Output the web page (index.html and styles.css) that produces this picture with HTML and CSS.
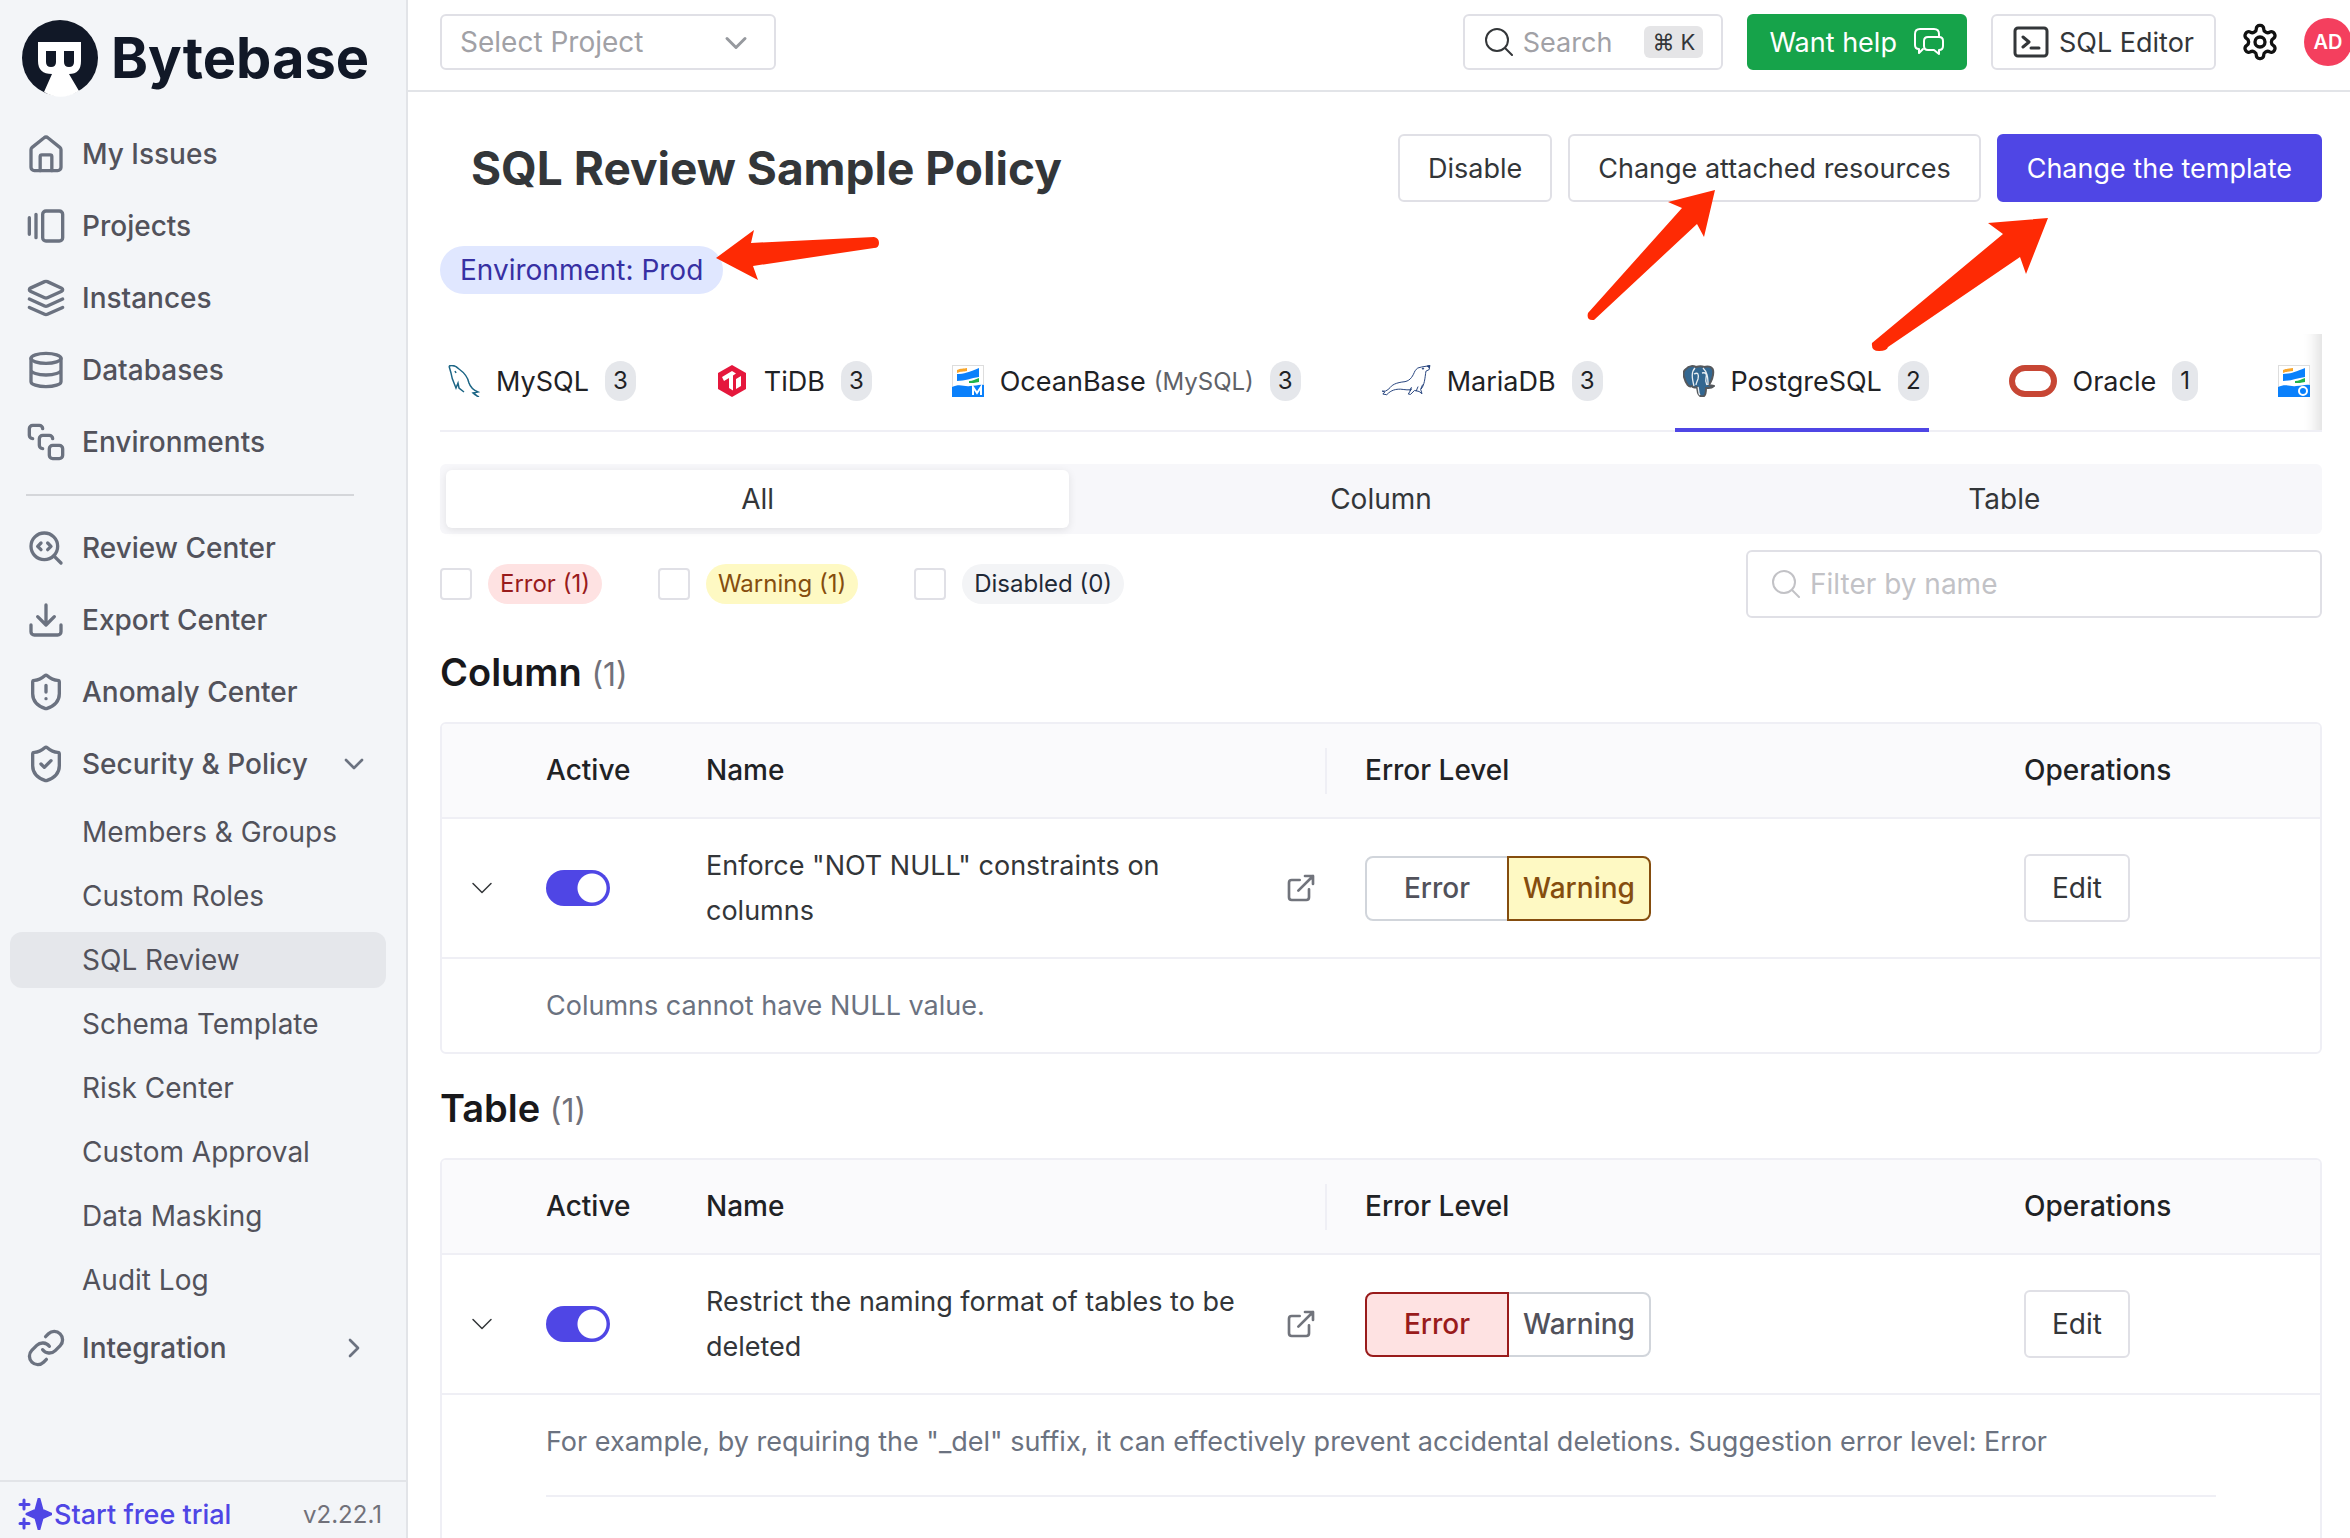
FILE: index.html
```html
<!DOCTYPE html>
<html lang="en">
<head>
<meta charset="utf-8">
<title>SQL Review Sample Policy - Bytebase</title>
<link rel="stylesheet" href="styles.css">
</head>
<body>
<svg class="sprite" aria-hidden="true">
  <symbol id="chevron-down" viewBox="0 0 24 24"><path d="m6 9 6 6 6-6"/></symbol>
  <symbol id="external" viewBox="0 0 24 24"><path d="M15 3h6v6M10 14 21 3M18 13v6a2 2 0 0 1-2 2H5a2 2 0 0 1-2-2V8a2 2 0 0 1 2-2h6"/></symbol>
  <symbol id="search" viewBox="0 0 28 28"><circle cx="12" cy="12" r="11"/><path d="m20 20 7 7"/></symbol>
  <symbol id="oceanbase" viewBox="0 0 32 32">
    <rect x=".5" y=".5" width="31" height="31" fill="#fff" stroke="#ddd"/>
    <path fill="#f8a62b" d="M5 5c4-2 6-1 10-2v3c-4 1-6 0-10 2z"/>
    <path fill="#0a80fb" d="M5 9c7 0 12-2 22-6v9c-8 1-14 4-22 4z"/>
    <path fill="#20b34a" d="M17 16c4 0 6-2 10-3v4c-4 1-7 1-10 1z"/>
    <path fill="#0a80fb" d="M0 22c8-4 12 0 18-1 6 0 9-2 14-1v12H0z"/>
  </symbol>
</svg>
<div class="app">
  <aside class="sidebar">
    <a class="brand" href="#">
      <svg class="brand-mark" viewBox="0 0 76 80" aria-hidden="true">
        <circle cx="38" cy="38" r="38" fill="#111827"/>
        <path fill="#fff" d="M16 22h43v19q0 13-12 13l10 17q-18 11-35 1l8-18q-14 0-14-13z"/>
        <path fill="#111827" d="M24 31h10v11q0 5-5 5t-5-5zM42 31h10v11q0 5-5 5t-5-5z"/>
      </svg>
      <span>Bytebase</span>
    </a>
    <nav class="nav">
      <a class="nav-item" href="#"><svg class="ico" viewBox="0 0 24 24"><path d="M3 9.500a2 2 0 0 1 .7-1.500l7-5.600a2 2 0 0 1 2.600 0l7 5.600a2 2 0 0 1 .7 1.500V20a2 2 0 0 1-2 2H5a2 2 0 0 1-2-2z"/><path d="M8.500 22v-8.500a1 1 0 0 1 1-1h5a1 1 0 0 1 1 1V22"/></svg>My Issues</a>
      <a class="nav-item" href="#"><svg class="ico" viewBox="0 0 24 24"><path d="M2 7v10M6 5v14"/><rect x="10" y="3" width="12" height="18" rx="2"/></svg>Projects</a>
      <a class="nav-item" href="#"><svg class="ico" viewBox="0 0 24 24"><path d="m12.830 2.180a2 2 0 0 0-1.660 0L2.600 6.080a1 1 0 0 0 0 1.830l8.580 3.910a2 2 0 0 0 1.660 0l8.580-3.900a1 1 0 0 0 0-1.830Z"/><path d="m22 17.650-9.170 4.160a2 2 0 0 1-1.660 0L2 17.650M22 12.650l-9.170 4.160a2 2 0 0 1-1.660 0L2 12.650"/></svg>Instances</a>
      <a class="nav-item" href="#"><svg class="ico" viewBox="0 0 24 24"><ellipse cx="12" cy="5" rx="9" ry="3"/><path d="M3 5v14a9 3 0 0 0 18 0V5M3 12a9 3 0 0 0 18 0"/></svg>Databases</a>
      <a class="nav-item" href="#"><svg class="ico" viewBox="0 0 24 24"><rect x="14" y="14" width="8" height="8" rx="2"/><path d="M4 10a2 2 0 0 1-2-2V4a2 2 0 0 1 2-2h4a2 2 0 0 1 2 2M10 16a2 2 0 0 1-2-2v-4a2 2 0 0 1 2-2h4a2 2 0 0 1 2 2"/></svg>Environments</a>
      <hr class="nav-rule">
      <a class="nav-item" href="#"><svg class="ico" viewBox="0 0 24 24"><path d="m9 9-2 2 2 2M13 13l2-2-2-2"/><circle cx="11" cy="11" r="8"/><path d="m21 21-4.300-4.300"/></svg>Review Center</a>
      <a class="nav-item" href="#"><svg class="ico" viewBox="0 0 24 24"><path d="M21 15v4a2 2 0 0 1-2 2H5a2 2 0 0 1-2-2v-4M7 10l5 5 5-5M12 15V3"/></svg>Export Center</a>
      <a class="nav-item" href="#"><svg class="ico" viewBox="0 0 24 24"><path d="M20 13c0 5-3.500 7.500-7.660 8.950a1 1 0 0 1-.67-.01C7.500 20.500 4 18 4 13V6a1 1 0 0 1 1-1c2 0 4.500-1.200 6.240-2.720a1.170 1.170 0 0 1 1.520 0C14.510 3.810 17 5 19 5a1 1 0 0 1 1 1z"/><path d="M12 8v4M12 16h.01"/></svg>Anomaly Center</a>
      <a class="nav-item" href="#"><svg class="ico" viewBox="0 0 24 24"><path d="M20 13c0 5-3.500 7.500-7.660 8.950a1 1 0 0 1-.67-.01C7.500 20.500 4 18 4 13V6a1 1 0 0 1 1-1c2 0 4.500-1.200 6.240-2.720a1.170 1.170 0 0 1 1.520 0C14.510 3.810 17 5 19 5a1 1 0 0 1 1 1z"/><path d="m9 12 2 2 4-4"/></svg>Security &amp; Policy<svg class="ico ico-end"><use href="#chevron-down"/></svg></a>
      <div class="subnav">
        <a class="sub-item" href="#">Members &amp; Groups</a>
        <a class="sub-item" href="#">Custom Roles</a>
        <a class="sub-item is-active" href="#">SQL Review</a>
        <a class="sub-item" href="#">Schema Template</a>
        <a class="sub-item" href="#">Risk Center</a>
        <a class="sub-item" href="#">Custom Approval</a>
        <a class="sub-item" href="#">Data Masking</a>
        <a class="sub-item" href="#">Audit Log</a>
      </div>
      <a class="nav-item" href="#"><svg class="ico" viewBox="0 0 24 24"><path d="M10 13a5 5 0 0 0 7.540.54l3-3a5 5 0 0 0-7.070-7.070l-1.720 1.710"/><path d="M14 11a5 5 0 0 0-7.540-.54l-3 3a5 5 0 0 0 7.070 7.070l1.710-1.710"/></svg>Integration<svg class="ico ico-end" viewBox="0 0 24 24"><path d="m9 18 6-6-6-6"/></svg></a>
    </nav>
    <footer class="side-foot">
      <a class="trial" href="#"><svg class="spark" viewBox="0 0 34 32" aria-hidden="true"><path d="M21 1 24 12l9 4-9 4-3 11-3-11-9-4 9-4zM6 2v9M2 6.500h9M6 21v9M2 25.500h9"/></svg>Start free trial</a>
      <span class="version">v2.22.1</span>
    </footer>
  </aside>

  <div class="content">
    <header class="topbar">
      <div class="select-wrap">
        <select class="select" aria-label="Project"><option>Select Project</option></select>
        <svg class="ico select-arrow"><use href="#chevron-down"/></svg>
      </div>
      <div class="top-actions">
        <button class="btn btn-top search-btn"><svg class="ico search-ico"><use href="#search"/></svg><span class="search-label">Search</span><kbd>⌘ K</kbd></button>
        <button class="btn btn-top btn-green">Want help<svg class="ico bubble" viewBox="0 0 32 32"><path d="M10 23 6 27v-4q-4 0-4-4V8q0-5 5-5h14q5 0 5 5v2"/><path d="M15 11h11q4 0 4 4v5q0 4-4 4v4l-5-4h-6q-4 0-4-4v-5q0-4 4-4z"/></svg></button>
        <button class="btn btn-top editor-btn"><svg class="ico terminal" viewBox="0 0 36 36"><rect x="2" y="4" width="32" height="28" rx="3"/><path d="m10 13 6 5-6 5M18 24h8"/></svg>SQL Editor</button>
        <a class="gear" href="#" aria-label="Settings"><svg class="ico" viewBox="0 0 24 24"><path d="M12.220 2h-.44a2 2 0 0 0-2 2v.18a2 2 0 0 1-1 1.730l-.43.25a2 2 0 0 1-2 0l-.15-.08a2 2 0 0 0-2.730.73l-.22.38a2 2 0 0 0 .73 2.730l.15.1a2 2 0 0 1 1 1.720v.51a2 2 0 0 1-1 1.740l-.15.09a2 2 0 0 0-.73 2.730l.22.38a2 2 0 0 0 2.730.73l.15-.08a2 2 0 0 1 2 0l.43.25a2 2 0 0 1 1 1.730V20a2 2 0 0 0 2 2h.44a2 2 0 0 0 2-2v-.18a2 2 0 0 1 1-1.730l.43-.25a2 2 0 0 1 2 0l.15.08a2 2 0 0 0 2.730-.73l.22-.39a2 2 0 0 0-.73-2.730l-.15-.08a2 2 0 0 1-1-1.740v-.5a2 2 0 0 1 1-1.740l.15-.09a2 2 0 0 0 .73-2.730l-.22-.38a2 2 0 0 0-2.730-.73l-.15.08a2 2 0 0 1-2 0l-.43-.25a2 2 0 0 1-1-1.730V4a2 2 0 0 0-2-2z"/><circle cx="12" cy="12" r="3"/></svg></a>
        <a class="avatar" href="#">AD</a>
      </div>
    </header>

    <main class="page">
      <div class="title-row">
        <h1>SQL Review Sample Policy</h1>
        <div class="title-actions">
          <button class="btn btn-lg">Disable</button>
          <div class="anchor">
            <button class="btn btn-lg">Change attached resources</button>
            <svg class="arrow arrow-attach" viewBox="0 0 134 134" aria-hidden="true"><path d="M131 2 84 14l14 6L4 125q-2 8 6 7L113 36l7 13z"/></svg>
          </div>
          <div class="anchor">
            <button class="btn btn-lg btn-primary">Change the template</button>
            <svg class="arrow arrow-template" viewBox="0 0 180 136" aria-hidden="true"><path d="M178 2 118 7l15 11L2 127q-1 8 7 8t9-4L150 41l6 17z"/></svg>
          </div>
        </div>
      </div>

      <div class="scope">
        <span class="anchor">
          <span class="pill">Environment: Prod</span>
          <svg class="arrow arrow-env" viewBox="0 0 166 54" aria-hidden="true"><path d="m1 30 38-28-3 13 123-6q5 1 5 6t-5 5L38 38l5 14z"/></svg>
        </span>
      </div>

      <div class="engines" role="tablist">
        <button class="engine" role="tab"><svg class="logo" viewBox="0 0 32 32" fill="none" stroke="#1c6585" stroke-width="1.500"><path d="M1 1q5-2 10 3c7 5 9 9 10 14q2 6 9 9l-5 1q2 2 6 4M1 1l2 7q1 6 3 10l2 5 2-5 1 5 5 4M26 28l4 4"/><path d="m7 6 1 2"/></svg>MySQL<span class="count">3</span></button>
        <button class="engine" role="tab"><svg class="logo" viewBox="0 0 32 32"><path fill="#e5173c" d="m16 0 14 8v16l-14 8L2 24V8z"/><path fill="#fff" d="m6 12 10-6 4 2.500-3 2v15l-4-2.500V13l-5 3zM20 14l5-3v10l-5 3z"/></svg>TiDB<span class="count">3</span></button>
        <button class="engine" role="tab"><svg class="logo" viewBox="0 0 32 32"><use href="#oceanbase"/><path fill="none" stroke="#fff" stroke-width="2" d="M21 30v-8l4 6 4-6v8"/></svg>OceanBase<span class="variant">(MySQL)</span><span class="count">3</span></button>
        <button class="engine" role="tab"><svg class="logo logo-maria" viewBox="26 32 150 98" fill="#fff" stroke="#24427c" stroke-width="3"><path d="M28 112q10 3 20-6c10-14 22-20 50-23 18-4 24-18 31-34q6-10 20-11l25-4-2 12-10 5c-3 20-4 44-16 56l4 13-9-7-14-3-12 12-7-1 10-16c-6 6-20 2-34 1-14 0-28 2-42 17l-12-2 6-6z"/><path d="M112 110l6-10M132 112l6-14M146 106l6-14"/><circle cx="153" cy="43" r="2" fill="#24427c"/><path fill="#24427c" d="m166 35 8-1-3 6z"/></svg>MariaDB<span class="count">3</span></button>
        <button class="engine is-active" role="tab" aria-selected="true"><svg class="logo" viewBox="0 0 32 32" stroke-linejoin="round"><path fill="#336791" stroke="#55585c" stroke-width="2" d="M3 4c3-4 8-3 10-2 3-1 6-1 8 0 3-1 8-1 9 3 1 5-1 10-4 15l5 1c-3 3-6 2-8 2 0 3 0 7-2 8-3 1-5 0-6-3l-1-6c-3 1-4 1-5-1-3 2-6-2-8-9-1-3-1-6 2-8z"/><path fill="none" stroke="#e8eef3" stroke-width="1.300" d="M12 3c-4 4-3 10-1 18M11 9c4-2 5 0 4 5-1 3-2 4-2 6M20 3c4 4 5 8 5 17M19 8c4-1 5 1 4 5-1 4 0 5 1 7M15 22c1 2 0 6 2 8"/></svg>PostgreSQL<span class="count">2</span></button>
        <button class="engine" role="tab"><svg class="logo logo-oracle" viewBox="0 0 48 32"><rect x="3" y="3" width="42" height="26" rx="13" fill="none" stroke="#c74634" stroke-width="6"/></svg>Oracle<span class="count">1</span></button>
        <button class="engine" role="tab" aria-label="OceanBase (Oracle)"><svg class="logo" viewBox="0 0 32 32"><use href="#oceanbase"/><ellipse cx="25" cy="26" rx="4" ry="4" fill="none" stroke="#fff" stroke-width="2"/></svg></button>
      </div>

      <div class="segment" role="tablist">
        <button class="segment-item is-active" role="tab" aria-selected="true">All</button>
        <button class="segment-item" role="tab">Column</button>
        <button class="segment-item" role="tab">Table</button>
      </div>

      <div class="filters">
        <label class="check"><input type="checkbox"><span class="tag tag-error">Error (1)</span></label>
        <label class="check"><input type="checkbox"><span class="tag tag-warning">Warning (1)</span></label>
        <label class="check"><input type="checkbox"><span class="tag tag-disabled">Disabled (0)</span></label>
        <label class="filter-box"><svg class="ico search-ico"><use href="#search"/></svg><input type="text" placeholder="Filter by name" aria-label="Filter by name"></label>
      </div>

      <section class="group">
        <h2>Column <span>(1)</span></h2>
        <div class="table-box">
          <table>
            <colgroup><col class="c-expand"><col class="c-active"><col><col><col class="c-ops"></colgroup>
            <thead><tr><th></th><th>Active</th><th class="resizable">Name</th><th>Error Level</th><th>Operations</th></tr></thead>
            <tbody>
              <tr>
                <td class="expand"><button class="icon-btn" aria-label="Collapse"><svg class="ico"><use href="#chevron-down"/></svg></button></td>
                <td><input class="switch" type="checkbox" checked aria-label="Active"></td>
                <td><div class="rule"><span>Enforce "NOT NULL" constraints on columns</span><a href="#" aria-label="Documentation"><svg class="ico"><use href="#external"/></svg></a></div></td>
                <td><div class="levels"><label class="level"><input type="radio" name="l1">Error</label><label class="level warn"><input type="radio" name="l1" checked>Warning</label></div></td>
                <td><button class="btn btn-edit">Edit</button></td>
              </tr>
              <tr><td class="detail" colspan="5">Columns cannot have NULL value.</td></tr>
            </tbody>
          </table>
        </div>
      </section>

      <section class="group">
        <h2>Table <span>(1)</span></h2>
        <div class="table-box">
          <table>
            <colgroup><col class="c-expand"><col class="c-active"><col><col><col class="c-ops"></colgroup>
            <thead><tr><th></th><th>Active</th><th class="resizable">Name</th><th>Error Level</th><th>Operations</th></tr></thead>
            <tbody>
              <tr>
                <td class="expand"><button class="icon-btn" aria-label="Collapse"><svg class="ico"><use href="#chevron-down"/></svg></button></td>
                <td><input class="switch" type="checkbox" checked aria-label="Active"></td>
                <td><div class="rule"><span>Restrict the naming format of tables to be deleted</span><a href="#" aria-label="Documentation"><svg class="ico"><use href="#external"/></svg></a></div></td>
                <td><div class="levels"><label class="level err"><input type="radio" name="l2" checked>Error</label><label class="level"><input type="radio" name="l2">Warning</label></div></td>
                <td><button class="btn btn-edit">Edit</button></td>
              </tr>
              <tr><td class="detail" colspan="5">For example, by requiring the "_del" suffix, it can effectively prevent accidental deletions. Suggestion error level: Error<div class="payload"></div></td></tr>
            </tbody>
          </table>
        </div>
      </section>
    </main>
  </div>
</div>
</body>
</html>
```
FILE: styles.css
```css
* { box-sizing: border-box; }
body {
  margin: 0;
  font-family: Inter, "Liberation Sans", sans-serif;
  font-size: 28px;
  line-height: 45px;
  color: #333639;
  background: #fff;
}
a { color: inherit; text-decoration: none; }
button, input, select, kbd { font: inherit; color: inherit; }
button { cursor: pointer; }
h1, h2 { margin: 0; }
.sprite { display: none; }
.ico {
  flex: none;
  width: 40px;
  height: 40px;
  fill: none;
  stroke: currentColor;
  stroke-width: 2;
  stroke-linecap: round;
  stroke-linejoin: round;
}
.anchor { position: relative; display: flex; }

.app { display: flex; height: 100vh; overflow: hidden; }

/* Sidebar */
.sidebar {
  flex: none;
  display: flex;
  flex-direction: column;
  width: 408px;
  background: #f3f5f8;
  border-right: 2px solid #e2e4e8;
  color: #52525b;
}
.brand {
  display: flex;
  align-items: flex-start;
  gap: 13px;
  padding: 20px 22px 0;
  height: 100px;
  font-size: 56px;
  font-weight: 700;
  line-height: 76px;
  color: #111827;
}
.brand-mark { flex: none; width: 76px; height: 80px; }
.nav {
  flex: 1;
  display: flex;
  flex-direction: column;
  gap: 16px;
  min-height: 0;
  padding: 26px 20px 0 10px;
}
.nav-item {
  display: flex;
  align-items: center;
  gap: 16px;
  height: 56px;
  padding: 0 16px;
  font-weight: 500;
}
.nav-item .ico { color: #6b7280; }
.nav-item .ico-end { width: 32px; height: 32px; margin-left: auto; }
.nav-rule {
  width: 328px;
  margin: 8px 16px;
  border: 0;
  border-top: 2px solid #d4d6da;
}
.subnav { display: flex; flex-direction: column; gap: 8px; margin: -4px 0; }
.sub-item {
  height: 56px;
  padding: 0 72px;
  line-height: 56px;
  white-space: nowrap;
  border-radius: 12px;
}
.sub-item.is-active { background: #e5e7eb; }
.side-foot {
  display: flex;
  align-items: center;
  justify-content: space-between;
  height: 58px;
  padding: 8px 24px 0 18px;
  border-top: 2px solid #e2e4e8;
}
.trial { display: flex; align-items: center; gap: 2px; color: #4f46e5; font-size: 27px; font-weight: 500; }
.spark { width: 34px; height: 32px; fill: currentColor; stroke: currentColor; stroke-width: 3; stroke-linecap: round; stroke-linejoin: round; }
.version { font-size: 24px; color: #71717a; }

/* Top bar */
.content { flex: 1; display: flex; flex-direction: column; min-width: 0; }
.topbar {
  flex: none;
  display: flex;
  align-items: center;
  justify-content: space-between;
  height: 92px;
  padding: 0 0 6px 32px;
  border-bottom: 2px solid #e2e4e8;
  overflow: hidden;
}
.select-wrap { position: relative; width: 336px; }
.select {
  display: block;
  width: 100%;
  height: 56px;
  padding: 0 18px;
  border: 2px solid #e0e0e6;
  border-radius: 6px;
  background: #fff;
  color: #a1a1a6;
  appearance: none;
}
.select-arrow { position: absolute; right: 22px; top: 11px; width: 36px; height: 36px; color: #96999e; }
.top-actions { display: flex; align-items: center; gap: 24px; margin-right: -2px; }
.btn {
  display: flex;
  align-items: center;
  border: 2px solid #e0e0e6;
  border-radius: 6px;
  background: #fff;
  white-space: nowrap;
}
.btn-top { height: 56px; padding: 0 20px; font-size: 27px; }
.search-ico { width: 28px; height: 28px; }
.search-btn { padding-right: 18px; }
.search-label { margin: 0 32px 0 10px; color: #a1a1a6; }
kbd { padding: 0 8px; border-radius: 6px; background: #e5e5e7; font-size: 22px; line-height: 32px; }
.btn-green { gap: 16px; border-color: #16a34a; background: #16a34a; color: #fff; }
.bubble { width: 32px; height: 32px; }
.editor-btn { gap: 10px; }
.terminal { width: 36px; height: 36px; stroke-width: 3; }
.gear { display: flex; color: #111; }
.avatar {
  width: 48px;
  height: 48px;
  border-radius: 50%;
  background: #f43f5e;
  color: #fff;
  font-size: 20px;
  font-weight: 600;
  line-height: 48px;
  text-align: center;
}

/* Page */
.page {
  flex: 1;
  min-height: 0;
  overflow: hidden;
  padding: 42px 28px 0 32px;
}
.title-row { display: flex; align-items: center; justify-content: space-between; padding-left: 31px; }
h1 { font-size: 46px; font-weight: 700; line-height: 68px; }
.title-actions { display: flex; gap: 16px; }
.btn-lg { height: 68px; padding: 0 28px; font-size: 27px; }
.btn-primary { border-color: #4f46e5; background: #4f46e5; color: #fff; }
.scope { display: flex; margin-top: 44px; }
.pill {
  padding: 0 20px;
  border-radius: 24px;
  background: #e0e7ff;
  color: #3730a3;
  line-height: 48px;
}
.arrow { position: absolute; z-index: 2; fill: #fe2a04; pointer-events: none; }
.arrow-attach { left: 16px; top: 54px; width: 134px; height: 134px; }
.arrow-template { left: -127px; top: 82px; width: 180px; height: 136px; }
.arrow-env { left: 275px; top: -18px; width: 166px; height: 54px; }

.engines {
  display: flex;
  gap: 72px;
  margin-top: 40px;
  overflow: hidden;
  box-shadow: inset 0 -2px #efeff5, inset -20px 0 14px -14px #0000001f;
}
.engine {
  display: flex;
  flex: none;
  align-items: center;
  height: 98px;
  padding: 0;
  border: 0;
  border-bottom: 4px solid transparent;
  background: none;
  color: #1f2225;
  font-size: 27px;
}
.engine.is-active { border-color: #4f46e5; }
.logo { width: 32px; height: 32px; margin: 0 16px 0 8px; }
.logo-maria { width: 50px; }
.logo-oracle { width: 48px; }
.variant { margin-left: 8px; font-size: 24px; color: #5f6268; }
.count {
  margin-left: 16px;
  padding: 0 8px;
  border-radius: 20px;
  background: #e5e7eb;
  font-size: 24px;
  line-height: 40px;
}

.segment { display: flex; margin-top: 32px; padding: 6px; border-radius: 6px; background: #f7f7fa; }
.segment-item { flex: 1; height: 58px; border: 0; border-radius: 6px; background: none; }
.segment-item.is-active { background: #fff; box-shadow: 0 2px 8px #00000018; }

.filters { display: flex; align-items: center; gap: 56px; margin-top: 16px; }
.check { display: flex; align-items: center; gap: 16px; }
.check input {
  width: 32px;
  height: 32px;
  margin: 0;
  border: 2px solid #e0e0e6;
  border-radius: 4px;
  background: #fff;
  appearance: none;
}
.tag { padding: 0 12px; border-radius: 20px; font-size: 24px; line-height: 40px; }
.tag-error { background: #fee2e2; color: #991b1b; }
.tag-warning { background: #fef9c3; color: #854d0e; }
.tag-disabled { background: #f3f4f6; color: #1f2937; }
.filter-box {
  display: flex;
  align-items: center;
  gap: 10px;
  width: 576px;
  height: 68px;
  margin-left: auto;
  padding: 0 24px;
  border: 2px solid #e0e0e6;
  border-radius: 6px;
  color: #c2c2c6;
}
.filter-box input { flex: 1; min-width: 0; padding: 0; border: 0; outline: 0; background: none; }
.filter-box input::placeholder { color: #c2c2c6; opacity: 1; }

/* Rule groups */
.group { margin-top: 30px; }
h2 { font-size: 38px; font-weight: 600; line-height: 48px; color: #18181b; }
h2 span { font-size: 32px; font-weight: 400; line-height: 32px; color: #71717a; }
.table-box { margin-top: 26px; border: 2px solid #efeff5; border-radius: 6px; overflow: hidden; }
table { width: 100%; table-layout: fixed; border-collapse: separate; border-spacing: 0; }
.c-expand { width: 80px; }
.c-active { width: 160px; }
.c-ops { width: 320px; }
th, td { padding: 24px; text-align: left; }
th { border-bottom: 2px solid #efeff5; background: #fafafc; font-weight: 500; color: #1f2225; }
.resizable { background: linear-gradient(#efeff5, #efeff5) right 14px center / 2px 46px no-repeat #fafafc; }
tbody tr:first-child td { border-bottom: 2px solid #efeff5; }
.icon-btn { display: flex; padding: 0; border: 0; background: none; }
.icon-btn .ico { width: 36px; height: 36px; margin: 0 -2px; stroke-width: 1; }
.switch {
  display: block;
  width: 64px;
  height: 36px;
  margin: 0;
  border-radius: 18px;
  background: radial-gradient(circle at 46px 18px, #fff 14px, #4f46e5 15px);
  appearance: none;
}
.rule { display: flex; align-items: center; justify-content: space-between; gap: 24px; font-size: 27px; }
.rule a { display: flex; color: #71747c; }
.rule .ico { width: 32px; height: 32px; }
.levels { display: flex; }
.level {
  width: 144px;
  height: 65px;
  border: 2px solid #d1d5db;
  border-radius: 0 8px 8px 0;
  font-weight: 500;
  line-height: 61px;
  text-align: center;
  color: #52525b;
}
.level:first-child { border-radius: 8px 0 0 8px; }
.level + .level { margin-left: -2px; }
.level input { position: absolute; opacity: 0; }
.level.warn { border-color: #854d0e; background: #fef9c3; color: #854d0e; }
.level.err { z-index: 1; position: relative; border-color: #991b1b; background: #fee2e2; color: #991b1b; }
.btn-edit { height: 68px; padding: 0 26px; }
.detail { padding: 24px 104px; font-size: 27px; color: #6b7280; }
.payload { height: 160px; margin-top: 31px; border-top: 2px solid #efeff5; }
.expand { padding-right: 0; }
```
